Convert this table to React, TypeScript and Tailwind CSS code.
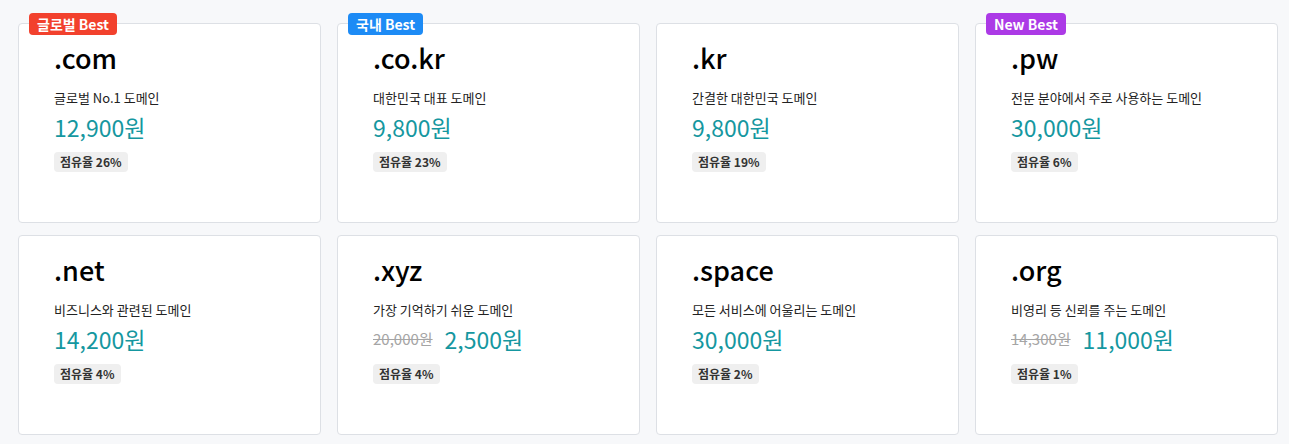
type Domain = {
  tld: string;
  desc: string;
  price: string;
  oldPrice?: string;
  share: string;
  badge?: { label: string; color: string };
};

const domains: Domain[] = [
  { tld: ".com", desc: "글로벌 No.1 도메인", price: "12,900원", share: "26%", badge: { label: "글로벌 Best", color: "bg-[#f2412d]" } },
  { tld: ".co.kr", desc: "대한민국 대표 도메인", price: "9,800원", share: "23%", badge: { label: "국내 Best", color: "bg-[#1d8bf5]" } },
  { tld: ".kr", desc: "간결한 대한민국 도메인", price: "9,800원", share: "19%" },
  { tld: ".pw", desc: "전문 분야에서 주로 사용하는 도메인", price: "30,000원", share: "6%", badge: { label: "New Best", color: "bg-[#ac3ae6]" } },
  { tld: ".net", desc: "비즈니스와 관련된 도메인", price: "14,200원", share: "4%" },
  { tld: ".xyz", desc: "가장 기억하기 쉬운 도메인", price: "2,500원", oldPrice: "20,000원", share: "4%" },
  { tld: ".space", desc: "모든 서비스에 어울리는 도메인", price: "30,000원", share: "2%" },
  { tld: ".org", desc: "비영리 등 신뢰를 주는 도메인", price: "11,000원", oldPrice: "14,300원", share: "1%" },
];

function DomainCard({ d }: { d: Domain }) {
  return (
    <div className="relative h-[200px] rounded-[4px] border border-[#dde0e5] bg-white pl-[35px] pt-[16px]">
      {d.badge && (
        <span
          className={`absolute -top-[11px] left-[10px] rounded-[4px] px-[8px] text-[14px] font-bold leading-[22px] text-white ${d.badge.color}`}
        >
          {d.badge.label}
        </span>
      )}
      <div className="text-[27px] font-medium leading-[36px] text-black">{d.tld}</div>
      <div className="mt-[13px] text-[13px] leading-[18px] text-[#222]">{d.desc}</div>
      <div className="mt-[5px] flex items-center gap-[12px]">
        {d.oldPrice && (
          <span className="text-[15px] leading-[30px] text-[#a5a5a5] line-through">{d.oldPrice}</span>
        )}
        <span className="text-[23px] leading-[30px] text-[#1597a0]">{d.price}</span>
      </div>
      <span className="mt-[10px] inline-block rounded-[4px] bg-[#efefef] px-[6px] text-[12px] font-bold leading-[20px] text-[#333]">
        점유율 {d.share}
      </span>
    </div>
  );
}

export default function App() {
  return (
    <div
      className="min-h-[444px] bg-[#f7f8fa] pl-[18px] pr-[11px] pt-[23px]"
      style={{ fontFamily: '"Noto Sans CJK KR", "Noto Sans", sans-serif' }}
    >
      <div className="grid grid-cols-4 gap-x-[16px] gap-y-[12px]">
        {domains.map((d) => (
          <DomainCard key={d.tld} d={d} />
        ))}
      </div>
    </div>
  );
}
